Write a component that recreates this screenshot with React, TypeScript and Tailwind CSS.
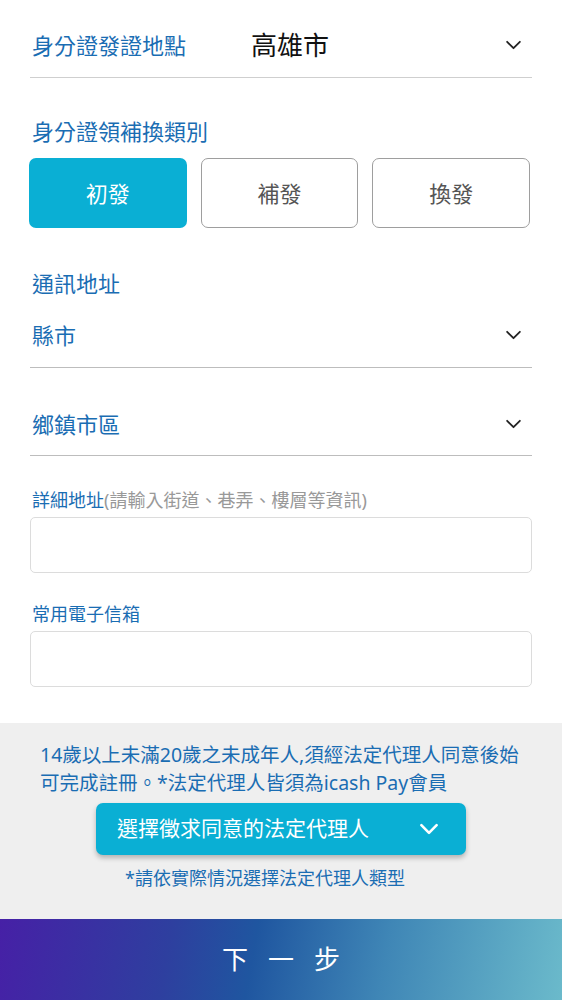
const font = { fontFamily: '"Noto Sans", "Noto Sans CJK TC", sans-serif' };

function Chevron({ white = false }: { white?: boolean }) {
  return (
    <svg
      width={white ? 20 : 17}
      height={white ? 12 : 10}
      viewBox="0 0 18 11"
      fill="none"
      stroke={white ? '#ffffff' : '#222222'}
      strokeWidth={white ? 2.4 : 2}
      strokeLinecap="round"
      strokeLinejoin="round"
    >
      <path d="M2 2l7 7 7-7" />
    </svg>
  );
}

const kinds = ['初發', '補發', '換發'];

export default function App() {
  const active = '初發';

  return (
    <div className="w-[562px] min-h-[1000px] bg-white flex flex-col text-[#1a6db3]" style={font}>
      <div className="px-[30px]">
        {/* 發證地點 */}
        <div className="flex items-center h-[78px] pt-[12px] pl-[2px] pr-[10px] border-b-[1.5px] border-[#cfcfcf]">
          <span className="text-[22px] leading-[30px] w-[219px]">身分證發證地點</span>
          <span className="flex-1 text-[26px] leading-[32px] text-[#111]">高雄市</span>
          <Chevron />
        </div>

        {/* 領補換類別 */}
        <div className="mt-[38px] pl-[2px] text-[22px] leading-[30px]">身分證領補換類別</div>
        <div className="mt-[12px] grid grid-cols-3 gap-[14px] pr-[2px] -ml-[1px]">
          {kinds.map(k => (
            <div
              key={k}
              className={`h-[70px] rounded-[7px] flex items-center justify-center text-[22px] ${
                k === active ? 'bg-[#0aafd4] text-white' : 'border border-[#9e9e9e] text-[#555]'
              }`}
            >
              {k}
            </div>
          ))}
        </div>

        {/* 通訊地址 */}
        <div className="mt-[40px] pl-[2px] text-[22px] leading-[30px]">通訊地址</div>
        <div className="mt-[5px] h-[65px] flex items-center justify-between pl-[2px] pr-[10px] border-b-[1.5px] border-[#bdbdbd]">
          <span className="text-[22px] leading-[30px]">縣市</span>
          <Chevron />
        </div>
        <div className="mt-[24px] h-[64px] flex items-center justify-between pl-[2px] pr-[10px] border-b-[1.5px] border-[#bdbdbd]">
          <span className="text-[22px] leading-[30px]">鄉鎮市區</span>
          <Chevron />
        </div>

        {/* 詳細地址 */}
        <div className="mt-[31px] pl-[2px] text-[18px] leading-[26px]">
          詳細地址<span className="text-[#999]">(請輸入街道、巷弄、樓層等資訊)</span>
        </div>
        <div className="mt-[4px] h-[56px] rounded-[5px] border-[1.5px] border-[#dcdcdc]" />

        <div className="mt-[28px] pl-[2px] text-[18px] leading-[26px]">常用電子信箱</div>
        <div className="mt-[4px] h-[56px] rounded-[5px] border-[1.5px] border-[#dcdcdc]" />
      </div>

      {/* 法定代理人 */}
      <div className="mt-[36px] bg-[#efefef] pt-[18px] pb-[28px]">
        <p className="px-[40px] text-[19.5px] leading-[28px]">
          <span className="block whitespace-nowrap">14歲以上未滿20歲之未成年人,須經法定代理人同意後始</span>
          <span className="block whitespace-nowrap">可完成註冊。*法定代理人皆須為icash Pay會員</span>
        </p>
        <button className="mt-[6px] mx-auto w-[370px] h-[52px] rounded-[7px] bg-[#0aafd4] shadow-[0_3px_5px_rgba(0,0,0,0.25)] flex items-center justify-between pl-[21px] pr-[27px] text-white text-[21px]">
          <span>選擇徵求同意的法定代理人</span>
          <Chevron white />
        </button>
        <div className="mt-[10px] pl-[125px] text-[18px] leading-[26px]">*請依實際情況選擇法定代理人類型</div>
      </div>

      {/* 下一步 */}
      <div className="flex-1 min-h-[81px] flex items-center justify-center bg-[linear-gradient(100deg,#4620a6_0%,#2e3f9f_30%,#1f56a0_45%,#3f86b6_68%,#6bbacb_100%)]">
        <span className="text-white text-[26px] tracking-[20px] pl-[20px]">下一步</span>
      </div>
    </div>
  );
}
